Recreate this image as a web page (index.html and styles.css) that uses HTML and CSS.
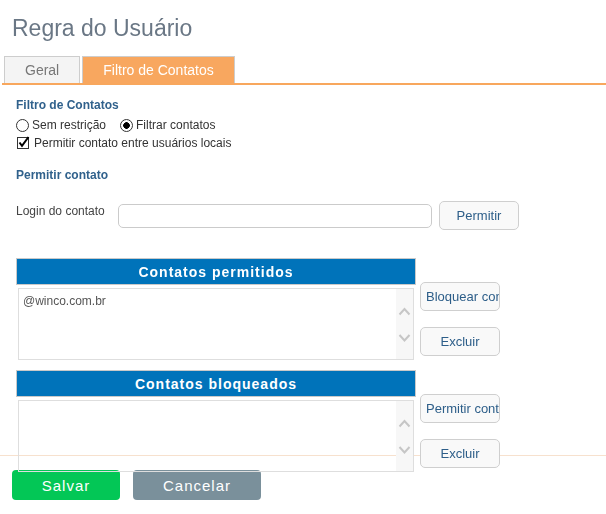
FILE: index.html
```html
<!DOCTYPE html>
<html lang="pt-br">
    <head>
        <meta charset="UTF-8">
        <meta name="viewport" content="width=device-width, initial-scale=1.0">
        <title>Regra do Usuário</title>

        <!-- CSS -->
        <link rel="stylesheet" href="styles.css">
    </head>
    <body>
        <div class="page">
            <h1 class="page-title">Regra do Usuário</h1>

            <ul class="tabs">
                <li class="tab">Geral</li>
                <li class="tab active">Filtro de Contatos</li>
            </ul>

            <div class="tab-body">
                <h2 class="section-title">Filtro de Contatos</h2>
                <div class="option-row">
                    <label class="option"><span class="radio"></span>Sem restrição</label>
                    <label class="option"><span class="radio checked"></span>Filtrar contatos</label>
                </div>
                <div class="option-row">
                    <label class="option">
                        <span class="check">
                            <svg width="14" height="14" viewBox="0 0 14 14">
                                <rect x="0.5" y="1.5" width="11" height="11" fill="#fff" stroke="#333"/>
                                <path d="M2.5 6.5 L5 9.8 L11.5 1" fill="none" stroke="#000" stroke-width="2"/>
                            </svg>
                        </span>Permitir contato entre usuários locais
                    </label>
                </div>

                <h2 class="section-title second">Permitir contato</h2>
                <div class="login-row">
                    <label class="login-label">Login do contato</label>
                    <input class="login-input" type="text">
                    <button class="btn">Permitir</button>
                </div>

                <!-- Contatos permitidos -->
                <div class="list-row">
                    <div class="list-col">
                        <div class="list-head">Contatos permitidos</div>
                        <div class="list-box">
                            <div class="list-items">
                                <div>@winco.com.br</div>
                            </div>
                            <div class="list-scroll">
                                <svg width="17" height="70" viewBox="0 0 17 70">
                                    <polyline points="3.5,25.5 8.5,20 13.5,25.5" fill="none" stroke="#c6c6c6" stroke-width="2"/>
                                    <polyline points="3.5,46 8.5,51.5 13.5,46" fill="none" stroke="#c6c6c6" stroke-width="2"/>
                                </svg>
                            </div>
                        </div>
                    </div>
                    <div class="list-actions">
                        <button class="btn btn-long">Bloquear contato</button>
                        <button class="btn">Excluir</button>
                    </div>
                </div>

                <!-- Contatos bloqueados -->
                <div class="list-row">
                    <div class="list-col">
                        <div class="list-head">Contatos bloqueados</div>
                        <div class="list-box">
                            <div class="list-items"></div>
                            <div class="list-scroll">
                                <svg width="17" height="70" viewBox="0 0 17 70">
                                    <polyline points="3.5,25.5 8.5,20 13.5,25.5" fill="none" stroke="#c6c6c6" stroke-width="2"/>
                                    <polyline points="3.5,46 8.5,51.5 13.5,46" fill="none" stroke="#c6c6c6" stroke-width="2"/>
                                </svg>
                            </div>
                        </div>
                    </div>
                    <div class="list-actions">
                        <button class="btn btn-long">Permitir contato</button>
                        <button class="btn">Excluir</button>
                    </div>
                </div>
            </div>
        </div>

        <footer class="footer">
            <button class="btn-save">Salvar</button>
            <button class="btn-cancel">Cancelar</button>
        </footer>
    </body>
</html>
```

FILE: styles.css
```css
/* Base */
*{
    box-sizing: border-box;
}

body{
    margin: 0;
    font-family: "Liberation Sans", Arial, Helvetica, sans-serif;
    font-size: 12px;
    color: #333;
    background: #fff;
}

.page{
    position: relative;
    z-index: 1;
    padding: 0 0 0 2px;
}

.page-title{
    margin: 0;
    padding: 14px 0 0 10px;
    font-size: 23px;
    line-height: 28px;
    font-weight: normal;
    color: #6a7785;
}

/* Abas */
.tabs{
    list-style: none;
    display: flex;
    gap: 2px;
    margin: 14px 0 0;
    padding: 0 0 0 2px;
    border-bottom: 2px solid #f8a75d;
}

.tab{
    height: 27px;
    line-height: 26px;
    padding: 0 20px;
    border: 1px solid #cdcdcd;
    border-bottom: none;
    background: #f4f4f4;
    color: #777;
    font-size: 14px;
}

.tab.active{
    background: #f8a75f;
    color: #fff;
}

/* Conteudo da aba */
.tab-body{
    padding: 13px 0 0 14px;
}

.section-title{
    margin: 0;
    font-size: 12px;
    line-height: 15px;
    font-weight: bold;
    color: #30618c;
}

.section-title.second{
    margin-top: 16px;
}

.option-row{
    display: flex;
    align-items: center;
    gap: 14px;
    height: 18px;
}

.option-row:first-of-type{
    margin-top: 3px;
}

.option{
    display: flex;
    align-items: center;
    color: #333;
}

.radio{
    width: 13px;
    height: 13px;
    margin-right: 3px;
    border: 1px solid #333;
    border-radius: 50%;
    background: #fff;
}

.radio.checked{
    background: radial-gradient(circle, #000 0 3px, #fff 3.6px);
}

.check{
    display: flex;
    width: 14px;
    height: 14px;
    margin: 0 3px 0 1px;
}

/* Login */
.login-row{
    display: flex;
    align-items: flex-start;
    margin-top: 18px;
}

.login-label{
    width: 102px;
    margin-top: 3px;
    color: #444;
}

.login-input{
    width: 314px;
    height: 24px;
    margin-top: 3px;
    border: 1px solid #cbcbcb;
    border-radius: 5px;
    background: #fff;
}

.btn{
    width: 80px;
    height: 29px;
    padding: 0 5px;
    border: 1px solid #cfcfcf;
    border-radius: 5px;
    background: #f9f9f9;
    color: #2d5e89;
    font-family: "Liberation Sans", Arial, Helvetica, sans-serif;
    font-size: 13px;
    text-align: center;
    white-space: nowrap;
    overflow: hidden;
}

.login-row .btn{
    margin-left: 7px;
}

.btn-long{
    text-align: left;
}

/* Listas */
.list-row{
    display: flex;
    margin-top: 10px;
}

.login-row + .list-row{
    margin-top: 28px;
}

.list-col{
    width: 400px;
}

.list-head{
    height: 27px;
    line-height: 26px;
    border: 1px solid #c9c9c9;
    background: #0073ba;
    color: #fff;
    font-size: 14px;
    font-weight: bold;
    letter-spacing: 1px;
    text-align: center;
}

.list-box{
    display: flex;
    height: 72px;
    margin: 3px 2px 0;
    border: 1px solid #dedede;
}

.list-items{
    flex: 1;
    padding: 5px 4px;
    color: #555;
    line-height: 14px;
}

.list-scroll{
    width: 17px;
    background: #f7f7f7;
}

.list-scroll svg{
    display: block;
}

.list-actions{
    display: flex;
    flex-direction: column;
    gap: 16px;
    margin: 24px 0 0 4px;
}

/* Rodape */
.footer{
    position: fixed;
    left: 0;
    right: 0;
    bottom: 0;
    z-index: 0;
    display: flex;
    gap: 13px;
    height: 59px;
    padding: 14px 12px 0;
    border-top: 1px solid #f7e1ce;
}

.btn-save, .btn-cancel{
    height: 30px;
    border: none;
    border-radius: 4px;
    color: #fff;
    font-family: "Liberation Sans", Arial, Helvetica, sans-serif;
    font-size: 15px;
    letter-spacing: 1px;
}

.btn-save{
    width: 108px;
    background: #03c756;
}

.btn-cancel{
    width: 128px;
    background: #7a909b;
}
```
